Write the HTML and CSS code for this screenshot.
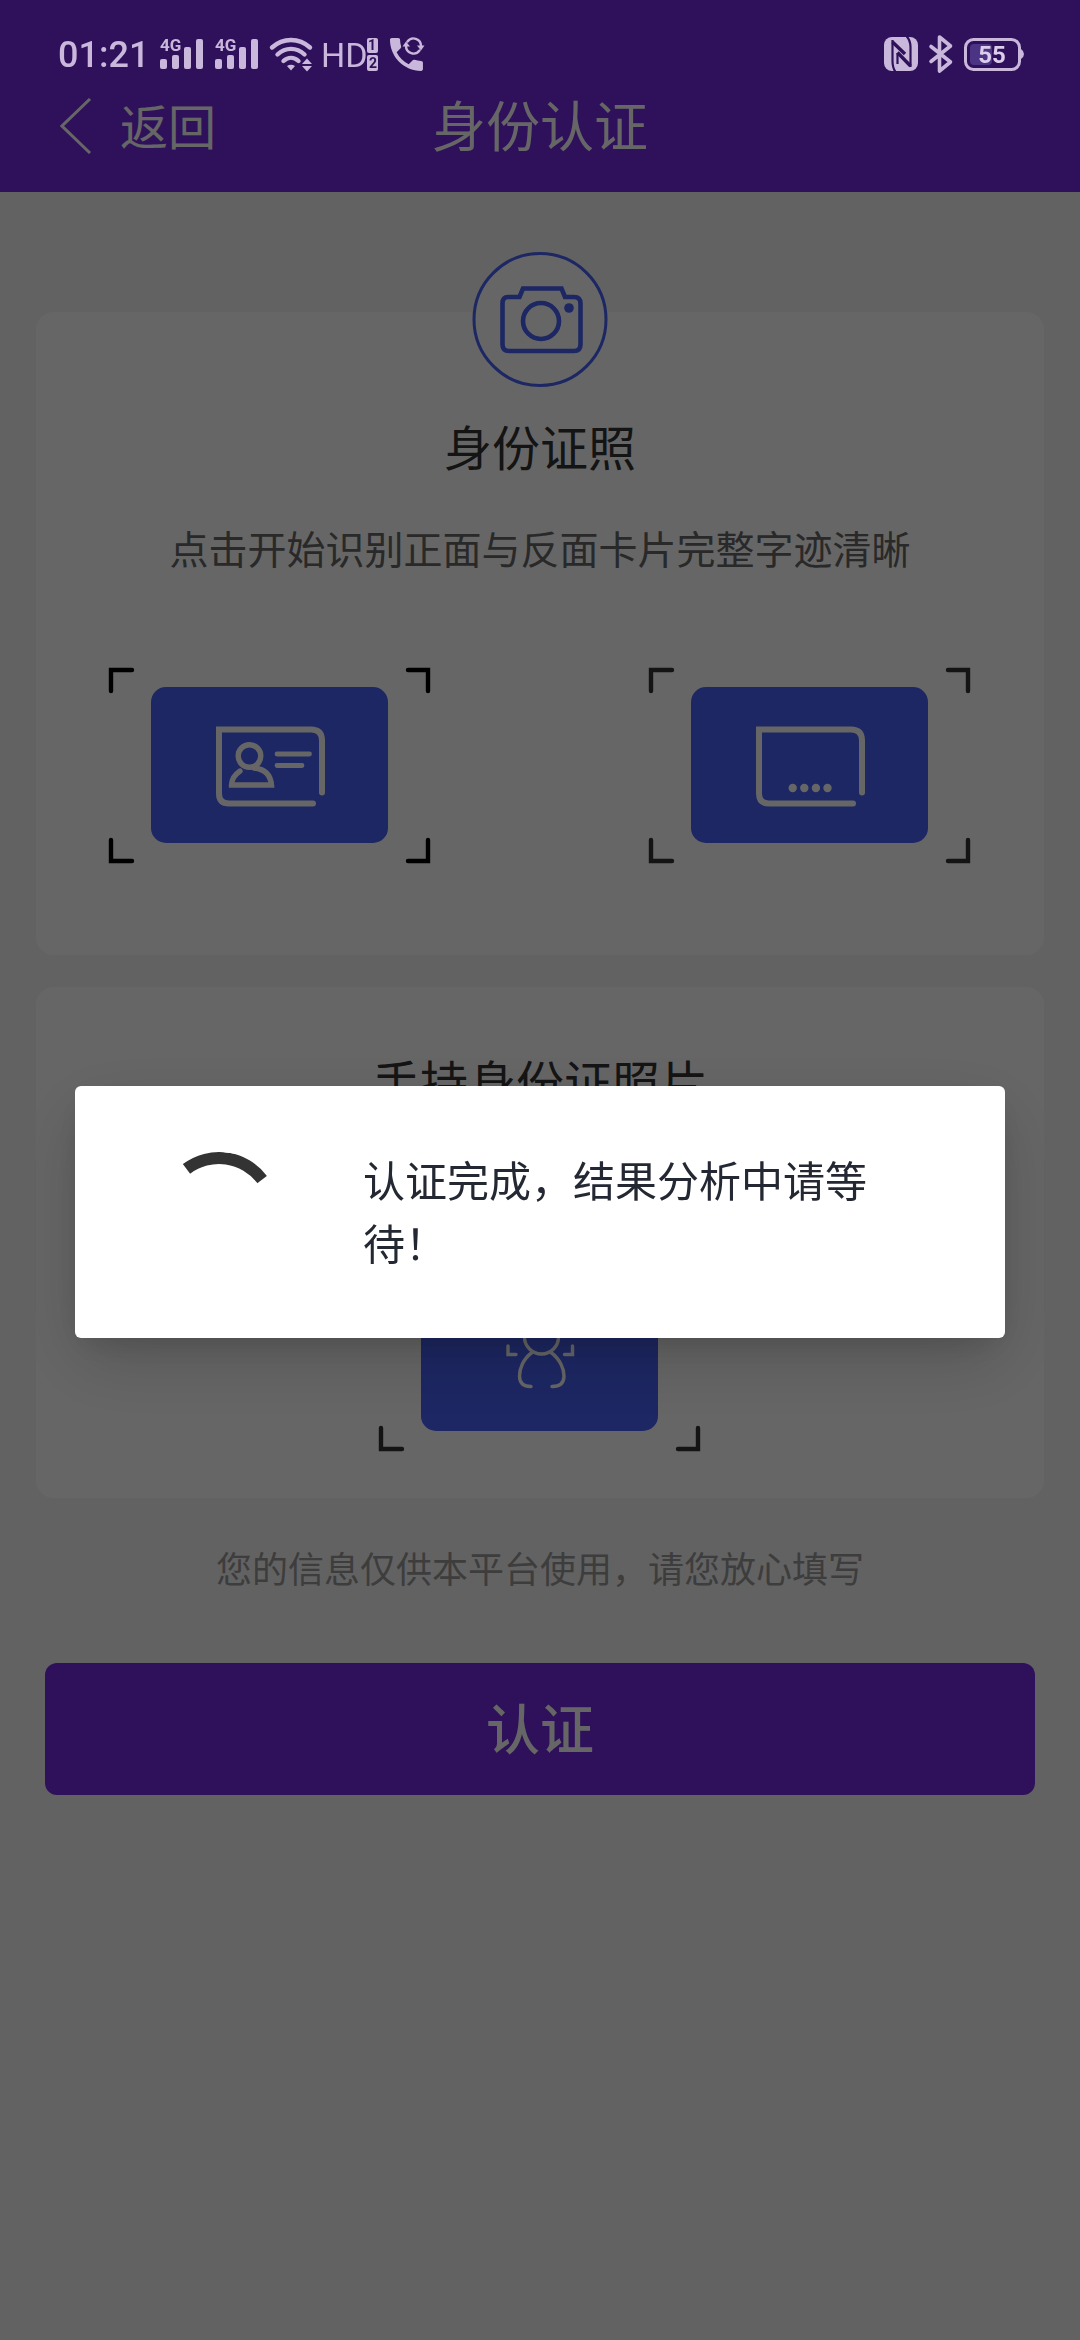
FILE: index.html
```html
<!DOCTYPE html>
<html lang="zh-CN">
<head>
<meta charset="utf-8">
<meta name="viewport" content="width=device-width, initial-scale=1">
<title>身份认证</title>
<link rel="stylesheet" href="styles.css">
</head>
<body>
<div class="status" aria-hidden="true">
  <div class="status-group">
    <span class="status-time">01:21</span>
    <svg class="status-icon" width="44" height="40" viewBox="0 0 44 40">
      <text class="net-label" x="0" y="17">4G</text>
      <rect x="0" y="25" width="7" height="10" rx="2"/><rect x="12" y="21" width="7" height="14" rx="2"/>
      <rect x="24" y="13" width="7" height="22" rx="2"/><rect x="36" y="5" width="7" height="30" rx="2"/>
    </svg>
    <svg class="status-icon" width="44" height="40" viewBox="0 0 44 40">
      <text class="net-label" x="0" y="17">4G</text>
      <rect x="0" y="25" width="7" height="10" rx="2"/><rect x="12" y="21" width="7" height="14" rx="2"/>
      <rect x="24" y="13" width="7" height="22" rx="2"/><rect x="36" y="5" width="7" height="30" rx="2"/>
    </svg>
    <svg class="status-icon" width="42" height="40" viewBox="0 0 42 40">
      <g class="line" stroke-width="4.4">
        <path d="M2 13.500C13 3.500 29 3.500 40 13.500"/>
        <path d="M7.500 20.500C15.500 13 26.500 13 34.500 20.500"/>
        <path d="M13.500 27C18 22.800 24 22.800 28.500 27"/>
      </g>
      <path d="M17 32q4-2.500 8 0l-4 4.500z"/>
      <path d="M32 30l5-5.500 5 5.500zM32 32h10l-5 5.500z"/>
    </svg>
    <svg class="status-icon" width="56" height="40" viewBox="0 0 56 40">
      <text class="hd-label" x="-2" y="33">HD</text>
      <rect x="44" y="4" width="11" height="15" rx="2"/><rect x="44" y="21" width="11" height="16" rx="2"/>
      <text class="sim-label" x="45" y="16">1</text><text class="sim-label" x="46" y="34">2</text>
    </svg>
    <svg class="status-icon" width="34" height="40" viewBox="0 0 34 40">
      <path transform="translate(-5.500 -1.500) scale(1.830)" d="M6.620 10.790c1.440 2.830 3.760 5.140 6.590 6.590l2.200-2.200c.27-.27.67-.36 1.020-.24 1.120.37 2.330.57 3.570.57.55 0 1 .45 1 1V20c0 .55-.45 1-1 1-9.390 0-17-7.610-17-17 0-.55.45-1 1-1h3.500c.55 0 1 .45 1 1 0 1.250.2 2.450.57 3.570.11.35.03.74-.25 1.020z"/>
      <path class="line" stroke-width="2.400" d="M17.500 7.500A7.500 7.500 0 0 1 31 12M29.500 16.500A7.500 7.500 0 0 1 16 12"/>
      <path d="M27 11.500h7.500l-3.500 5zM12.500 12.500h7.500l-4-5z"/>
    </svg>
  </div>
  <div class="status-group">
    <svg class="status-icon" width="34" height="40" viewBox="0 0 34 40">
      <rect x="0" y="3" width="34" height="34" rx="8"/>
      <g class="cut"><path stroke-width="2.200" d="M11.500 38C9 34.500 8.500 31 8.500 27V6M22.500 2C25.500 5.500 26.500 9 26.500 13V33M13.500 19V30"/><path stroke-width="3.400" d="M8.500 8L21 20M13.500 18.500L26.500 32"/></g>
    </svg>
    <svg class="status-icon" width="24" height="40" viewBox="0 0 24 40">
      <path class="line" stroke-width="3.600" d="M2 12.500L21.500 28 10.500 37V3l11 9L2 27.500"/>
    </svg>
    <svg class="status-icon" width="60" height="40" viewBox="0 0 60 40">
      <rect class="charge" x="6" y="10" width="22" height="21" rx="4"/>
      <rect class="line" x="1.500" y="5.500" width="54" height="30" rx="8" stroke-width="3"/>
      <path d="M57 15q3 2 3 5t-3 5z"/>
      <text class="battery-label" x="28" y="29" text-anchor="middle">55</text>
    </svg>
  </div>
</div>

<header class="header">
  <button class="back" type="button">
    <svg width="32" height="56" viewBox="0 0 32 56"><path d="M30 1L2 28l28 27"/></svg>
    <span class="back-label">返回</span>
  </button>
  <h1 class="header-title">身份认证</h1>
</header>

<main class="content">
  <section class="card card-id">
    <svg class="badge" width="136" height="136" viewBox="0 0 136 136">
      <circle class="badge-ring" cx="68" cy="67.500" r="66"/>
      <path class="badge-line" d="M36 45h11.500l3.500-8.500h38.500l3.500 8.500H102q6.500 0 6.500 6.500V92.500q0 6.500-6.500 6.500H37q-6.500 0-6.500-6.500V51.500q0-6.500 5.500-6.500z"/>
      <circle class="badge-line" cx="69" cy="69" r="18"/>
      <circle class="badge-dot" cx="97" cy="56" r="4.800"/>
    </svg>
    <h2 class="card-title">身份证照</h2>
    <p class="card-text">点击开始识别正面与反面卡片完整字迹清晰</p>
    <div class="shots">
      <button class="shot shot-active" type="button" aria-label="身份证正面">
        <svg width="324" height="198" viewBox="0 0 324 198">
          <path class="corner" d="M3 24V3h21M300 3h20v21M320 173v21h-20M24 194H3v-21"/>
          <rect class="panel" x="43" y="20" width="237" height="156" rx="15"/>
          <g class="glyph" stroke-width="6">
            <path d="M205 136.500H121q-10 0-10-10V62.500H203q11 0 11 11V125.500"/>
            <g stroke-width="5.400"><circle cx="141.500" cy="89" r="11.300"/>
            <path d="M132 104Q123.500 110 123.500 118H163.500Q162 102.500 146 101"/></g>
            <path stroke-width="4.800" d="M169 87H201.500M169 98.500H194"/>
          </g>
        </svg>
      </button>
      <button class="shot" type="button" aria-label="身份证反面">
        <svg width="324" height="198" viewBox="0 0 324 198">
          <path class="corner" d="M3 24V3h21M300 3h20v21M320 173v21h-20M24 194H3v-21"/>
          <rect class="panel" x="43" y="20" width="237" height="156" rx="15"/>
          <path class="glyph" stroke-width="6" d="M205 136.500H121q-10 0-10-10V62.500H203q11 0 11 11V125.500"/>
          <g class="dots"><circle cx="144.700" cy="121" r="4.200"/><circle cx="156.300" cy="121" r="4.200"/><circle cx="167.900" cy="121" r="4.200"/><circle cx="179.500" cy="121" r="4.200"/></g>
        </svg>
      </button>
    </div>
  </section>

  <section class="card card-hand">
    <h2 class="card-title">手持身份证照片</h2>
    <div class="shots shots-single">
      <button class="shot" type="button" aria-label="手持身份证照片">
        <svg width="324" height="198" viewBox="0 0 324 198">
          <path class="corner" d="M3 24V3h21M300 3h20v21M320 173v21h-20M24 194H3v-21"/>
          <rect class="panel" x="43" y="20" width="237" height="156" rx="15"/>
          <g class="glyph" stroke-width="3.400">
            <circle cx="163.500" cy="82" r="17"/>
            <path d="M154 97.500C145 104 141.500 114 141.500 121Q141.500 131.500 153 131.500M173 97.500C182 104 186 114 186 121Q186 131.500 174 131.500"/>
            <path d="M130 91v8.500h8M194.500 91v8.500h-8M130 63v-8.500h8M194.500 63v-8.500h-8"/>
          </g>
        </svg>
      </button>
    </div>
  </section>

  <p class="notice">您的信息仅供本平台使用，请您放心填写</p>
  <button class="submit" type="button">认证</button>
</main>

<div class="overlay">
  <div class="dialog" role="alertdialog" aria-modal="true" aria-labelledby="dialog-text">
    <span class="spinner"></span>
    <p class="dialog-text" id="dialog-text">认证完成，结果分析中请等待！</p>
  </div>
</div>
</body>
</html>
```

FILE: styles.css
```css
* {
  box-sizing: border-box;
}

body {
  margin: 0;
  min-height: 100vh;
  background: #f6f6f6;
  color: #333;
  font-family: "Noto Sans CJK SC", "Noto Sans", sans-serif;
}

h1,
h2,
p {
  margin: 0;
  font-weight: 400;
}

button {
  margin: 0;
  padding: 0;
  border: 0;
  background: none;
  color: inherit;
  font: inherit;
}

svg {
  display: block;
}

/* System status bar, drawn above the page mask */
.status {
  position: fixed;
  z-index: 20;
  top: 0;
  left: 0;
  right: 0;
  display: flex;
  align-items: center;
  justify-content: space-between;
  height: 108px;
  padding: 0 56px 0 58px;
  color: #c9b8dc;
  font-family: Roboto, sans-serif;
}

.status-group {
  display: flex;
  align-items: center;
  gap: 11px;
}

.status-time {
  padding-top: 2px;
  font-size: 36px;
  font-weight: 500;
  line-height: 40px;
}

.status-icon {
  overflow: visible;
  fill: currentColor;
}

.line {
  fill: none;
  stroke: #c9b8dc;
  stroke-linecap: round;
  stroke-linejoin: round;
}

.cut {
  fill: none;
  stroke: #2f115a;
}

.charge {
  fill: #4c3484;
}

.net-label {
  font-size: 17px;
  font-weight: 700;
}

.hd-label {
  font-size: 34px;
}

.sim-label {
  fill: #2f115a;
  font-size: 14px;
  font-weight: 700;
}

.battery-label {
  fill: #dccdec;
  font-size: 24px;
  font-weight: 700;
}

/* Page header */
.header {
  display: grid;
  grid-template-columns: 1fr auto 1fr;
  align-items: center;
  height: 192px;
  padding: 60px 60px 0;
  background: #752ae0;
  color: #fff;
}

.back {
  display: flex;
  align-items: center;
  gap: 28px;
  justify-self: start;
  font-size: 48px;
  line-height: 72px;
}

.back path {
  fill: none;
  stroke: #fff;
  stroke-width: 3;
}

.back-label,
.header-title {
  padding-bottom: 4px;
}

.header-title {
  font-size: 54px;
  line-height: 72px;
}

/* Cards */
.content {
  display: flex;
  flex-direction: column;
  padding: 120px 36px 60px;
}

.card {
  display: flex;
  flex-direction: column;
  align-items: center;
  border-radius: 18px;
  background: #fff;
}

.card-id {
  padding: 0 72px 90px;
}

.card-hand {
  margin-top: 32px;
  padding: 57px 72px 45px;
}

.badge {
  margin: -60px 0 21px;
}

.badge-ring {
  fill: #fff;
  stroke: #4861f7;
  stroke-width: 3;
}

.badge-line {
  fill: none;
  stroke: #4861f7;
  stroke-width: 4.6;
}

.badge-dot {
  fill: #4861f7;
}

.card-title {
  font-size: 48px;
  line-height: 72px;
}

.card-text {
  margin-top: 36px;
  color: #666;
  font-size: 39px;
  line-height: 60px;
}

.shots {
  display: flex;
  justify-content: space-between;
  align-self: stretch;
  margin-top: 90px;
}

.shots-single {
  justify-content: center;
  margin-top: 139px;
}

.corner {
  fill: none;
  stroke: #333;
  stroke-width: 4.4;
  stroke-linecap: round;
}

.shot-active .corner {
  stroke: #000;
}

.panel {
  fill: #4861f7;
}

.glyph {
  fill: none;
  stroke: #fff;
  stroke-linecap: round;
}

.dots {
  fill: #fff;
}

.notice {
  margin-top: 42px;
  color: #999;
  font-size: 36px;
  line-height: 54px;
  text-align: center;
}

.submit {
  height: 132px;
  margin: 69px 9px 0;
  padding-bottom: 4px;
  border-radius: 12px;
  background: #752ae0;
  color: #fff;
  font-size: 54px;
  font-weight: 500;
  line-height: 72px;
}

/* Loading dialog */
.overlay {
  position: fixed;
  z-index: 10;
  inset: 0;
  display: flex;
  align-items: center;
  justify-content: center;
  padding: 84px 75px 0;
  background: rgba(0, 0, 0, 0.6);
}

.dialog {
  display: flex;
  align-items: center;
  gap: 84px;
  width: 100%;
  padding: 61px 84px;
  border-radius: 6px;
  background: #fff;
  box-shadow: 0 12px 30px -9px rgba(0, 0, 0, 0.16), 0 24px 72px rgba(0, 0, 0, 0.16);
}

.spinner {
  flex: none;
  width: 120px;
  height: 120px;
  border: 12px solid transparent;
  border-top-color: #333;
  border-radius: 50%;
  transform: rotate(8deg);
}

.dialog-text {
  padding-bottom: 4px;
  color: #242833;
  font-size: 42px;
  line-height: 63px;
}
```
